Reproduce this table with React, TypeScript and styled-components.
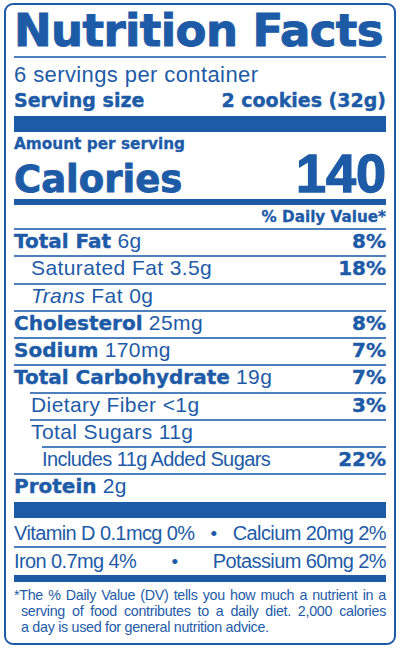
import React from "react";
import styled, { createGlobalStyle } from "styled-components";

const BLUE = "#1e5ba7";
const LINE = "#4f80be";
const HEAVY = `"DejaVu Sans", "Liberation Sans", sans-serif`;
const REG = `"Liberation Sans", Arial, sans-serif`;

const GlobalStyle = createGlobalStyle`
  html, body { margin: 0; padding: 0; background: #ffffff; }
  body { font-family: ${REG}; color: ${BLUE}; }
  * { box-sizing: border-box; }
`;

const Page = styled.div`
  width: 400px;
  height: 649px;
  padding: 3px 4px 4px 4px;
`;

const Label = styled.section`
  height: 642px;
  border: 2px solid ${BLUE};
  border-radius: 9px;
  padding: 0 8px;
  display: flex;
  flex-direction: column;
`;

const Title = styled.h1`
  margin: 0;
  height: 53px;
  font-family: ${HEAVY};
  font-weight: 700;
  font-size: 45px;
  line-height: 51px;
  letter-spacing: -0.6px;
  white-space: nowrap;
  -webkit-text-stroke: 1px ${BLUE};
  border-bottom: 2px solid ${LINE};
`;

const Servings = styled.div`
  height: 30px;
  padding-top: 4px;
  font-size: 22px;
  line-height: 26px;
  letter-spacing: 0.4px;
`;

const ServingSize = styled.div`
  height: 28px;
  padding-top: 1px;
  display: flex;
  justify-content: space-between;
  align-items: baseline;
  font-family: ${HEAVY};
  font-weight: 700;
  font-size: 19px;
  line-height: 22px;
  -webkit-text-stroke: 0.4px ${BLUE};
`;

const Bar = styled.div<{ $h: number }>`
  height: ${(p) => p.$h}px;
  flex: none;
  background: ${BLUE};
`;

const Amount = styled.div`
  height: 21px;
  padding-top: 3px;
  font-family: ${HEAVY};
  font-weight: 700;
  font-size: 15.3px;
  line-height: 18px;
  -webkit-text-stroke: 0.3px ${BLUE};
`;

const CaloriesRow = styled.div`
  height: 46px;
  display: flex;
  justify-content: space-between;
  align-items: baseline;
`;

const CaloriesLabel = styled.span`
  font-family: ${HEAVY};
  font-weight: 700;
  font-size: 37px;
  line-height: 37px;
  -webkit-text-stroke: 0.9px ${BLUE};
`;

const CaloriesValue = styled.span`
  font-family: ${REG};
  font-weight: 700;
  font-size: 54px;
  line-height: 40px;
  -webkit-text-stroke: 1.4px ${BLUE};
`;

const DailyValue = styled.div`
  height: 23px;
  padding-top: 3px;
  text-align: right;
  font-family: ${HEAVY};
  font-weight: 700;
  font-size: 15.2px;
  line-height: 18px;
  -webkit-text-stroke: 0.3px ${BLUE};
`;

const Row = styled.div<{ $line: number; $indent: number; $h?: number }>`
  height: ${(p) => p.$h ?? 27.25}px;
  flex: none;
  margin-left: ${(p) => p.$line}px;
  padding-left: ${(p) => p.$indent - p.$line}px;
  padding-top: 1px;
  border-top: 2px solid ${LINE};
  display: flex;
  justify-content: space-between;
  align-items: baseline;
  line-height: 20px;
  white-space: nowrap;
`;

const Name = styled.span`
  font-family: ${HEAVY};
  font-weight: 700;
  font-size: 20px;
  -webkit-text-stroke: 0.4px ${BLUE};
`;

const Value = styled.span<{ $narrow?: boolean }>`
  font-family: ${REG};
  font-weight: 400;
  font-size: ${(p) => (p.$narrow ? 20 : 21)}px;
  letter-spacing: ${(p) => (p.$narrow ? -0.6 : 0.4)}px;
`;

const Percent = styled.span`
  font-family: ${HEAVY};
  font-weight: 700;
  font-size: 20px;
  -webkit-text-stroke: 0.4px ${BLUE};
`;

const MineralRow = styled.div<{ $top: number; $ruled?: boolean }>`
  height: ${(p) => (p.$ruled ? 29 : 28)}px;
  flex: none;
  padding-top: ${(p) => p.$top}px;
  border-top: ${(p) => (p.$ruled ? `2px solid ${LINE}` : "none")};
  display: flex;
  justify-content: space-between;
  align-items: baseline;
  font-size: 20px;
  letter-spacing: -0.6px;
  line-height: 22px;
  white-space: nowrap;
`;

const Dot = styled.span`
  font-size: 19px;
`;

const Footnote = styled.div`
  padding: 4.5px 0 0 7px;
  font-size: 14.3px;
  line-height: 16px;
  letter-spacing: -0.3px;
`;

const FootLine = styled.span<{ $hang?: boolean; $justify?: boolean }>`
  display: block;
  margin-left: ${(p) => (p.$hang ? -7 : 0)}px;
  text-align: ${(p) => (p.$justify ? "justify" : "left")};
  text-align-last: ${(p) => (p.$justify ? "justify" : "left")};
`;

type Nutrient = {
  name: React.ReactNode;
  amount?: string;
  pct?: string;
  bold?: boolean;
  indent?: number;
  line?: number;
  narrow?: boolean;
};

const nutrients: Nutrient[] = [
  { name: "Total Fat", amount: "6g", pct: "8%", bold: true },
  { name: "Saturated Fat", amount: "3.5g", pct: "18%", indent: 17 },
  { name: <><i>Trans</i> Fat</>, amount: "0g", indent: 17 },
  { name: "Cholesterol", amount: "25mg", pct: "8%", bold: true },
  { name: "Sodium", amount: "170mg", pct: "7%", bold: true },
  { name: "Total Carbohydrate", amount: "19g", pct: "7%", bold: true },
  { name: "Dietary Fiber", amount: "<1g", pct: "3%", indent: 17, line: 16 },
  { name: "Total Sugars", amount: "11g", indent: 17, line: 16 },
  { name: "Includes 11g Added Sugars", pct: "22%", indent: 28, line: 28, narrow: true },
];

export default function App() {
  return (
    <Page>
      <GlobalStyle />
      <Label>
        <Title>Nutrition Facts</Title>
        <Servings>6 servings per container</Servings>
        <ServingSize>
          <span>Serving size</span>
          <span>2 cookies (32g)</span>
        </ServingSize>
        <Bar $h={16} />
        <Amount>Amount per serving</Amount>
        <CaloriesRow>
          <CaloriesLabel>Calories</CaloriesLabel>
          <CaloriesValue>140</CaloriesValue>
        </CaloriesRow>
        <Bar $h={6} />
        <DailyValue>% Daily Value*</DailyValue>
        {nutrients.map((n, i) => (
          <Row key={i} $line={n.line ?? 0} $indent={n.indent ?? 0}>
            <span>
              {n.bold ? (
                <>
                  <Name>{n.name}</Name>
                  {n.amount && <Value> {n.amount}</Value>}
                </>
              ) : (
                <Value $narrow={n.narrow}>
                  {n.name}
                  {n.amount ? ` ${n.amount}` : ""}
                </Value>
              )}
            </span>
            {n.pct && <Percent>{n.pct}</Percent>}
          </Row>
        ))}
        <Row $line={0} $indent={0} $h={29}>
          <span>
            <Name>Protein</Name>
            <Value> 2g</Value>
          </span>
        </Row>
        <Bar $h={16} />
        <MineralRow $top={4}>
          <span>Vitamin D 0.1mcg 0%</span>
          <Dot>•</Dot>
          <span>Calcium 20mg 2%</span>
        </MineralRow>
        <MineralRow $top={2} $ruled>
          <span>Iron 0.7mg 4%</span>
          <Dot>•</Dot>
          <span>Potassium 60mg 2%</span>
        </MineralRow>
        <Bar $h={7} />
        <Footnote>
          <FootLine $hang $justify>
            *The % Daily Value (DV) tells you how much a nutrient in a
          </FootLine>
          <FootLine $justify>
            serving of food contributes to a daily diet. 2,000 calories
          </FootLine>
          <FootLine>a day is used for general nutrition advice.</FootLine>
        </Footnote>
      </Label>
    </Page>
  );
}
